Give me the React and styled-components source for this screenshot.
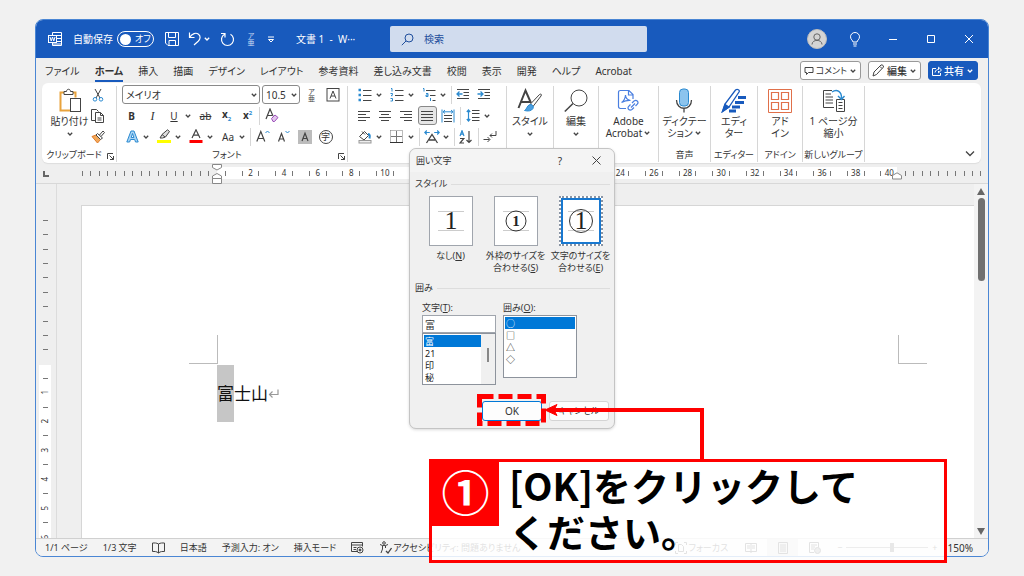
import React from "react";
import { useState } from "react";
import styled, { createGlobalStyle } from "styled-components";

const tabs = ["ファイル", "ホーム", "挿入", "描画", "デザイン", "レイアウト", "参考資料", "差し込み文書", "校閲", "表示", "開発", "ヘルプ", "Acrobat"];

const BLUE = "#185abd";
const SKY = "#2b8ad0";
const INK = "#444";

const Icon = ({ w = 16, h = 16, children, ...rest }) => (
	<svg width={w} height={h} viewBox={`0 0 ${w} ${h}`} fill="none" stroke={INK} strokeWidth="1" aria-hidden="true" {...rest}>
		{children}
	</svg>
);

const Chevron = ({ color = INK }) => (
	<Icon w={8} h={6} stroke={color} strokeWidth="1.3">
		<path d="M1.8 1.8 4 4l2.2-2.2" />
	</Icon>
);

const Launcher = () => (
	<Icon w={9} h={9}>
		<path d="M1.5 7V1.5H7M3.5 3.5l4 4M7.5 4v3.5H4" />
	</Icon>
);

/* title bar */

const WordIcon = () => (
	<Icon w={14} h={14} stroke="#fff">
		<path d="M4.5 3.5v-3h9v13h-9v-3M9 3.5h4.500M9 6.500h4.500M9 9.500h4.500M4.500 12h9" />
		<rect x="0.5" y="3.5" width="8" height="7" fill={BLUE} />
		<path d="m2 5 1.200 4 1.300-4 1.300 4L7 5" />
	</Icon>
);

const SaveIcon = () => (
	<Icon w={14} h={14} stroke="#fff">
		<path d="M.5 .5h13v13H3l-2.500-2.500zM3.500 .5v5h7v-5M4 13.500v-5h6.500v5" />
	</Icon>
);

const UndoIcon = () => (
	<Icon w={14} h={16} stroke="#fff" strokeWidth="1.2">
		<path d="M1.500 1.500v5h5M1.800 6.200C4 2.500 8 1.200 10.500 3.200c2.500 2 1.800 5-.3 7L6 14" />
	</Icon>
);

const RedoIcon = () => (
	<Icon w={15} h={15} stroke="#fff" strokeWidth="1.2">
		<path d="M4.500 2.300A6 6 0 1 0 10.500 2.300M1 1.500h4v4" />
	</Icon>
);

const Ruby = ({ color }) => (
	<RubyBox $color={color}>
		<span>ア</span>
		<span>亜</span>
	</RubyBox>
);

const SearchIcon = () => (
	<Icon w={13} h={13} stroke="#1f4e9c">
		<circle cx="8" cy="5" r="4" />
		<path d="M5 8 .8 12.200" />
	</Icon>
);

const PersonIcon = () => (
	<Icon w={20} h={20} stroke="#666">
		<circle cx="10" cy="10" r="9.500" fill="#d4d4d4" stroke="#bdbdbd" />
		<circle cx="10" cy="8" r="3.200" />
		<path d="M5 15.500c0-5.500 10-5.500 10 0" />
	</Icon>
);

const BulbIcon = () => (
	<Icon w={12} h={15} stroke="#fff">
		<path d="M4 10c0-1.500-2.500-2.500-2.500-5.200a4.500 4.300 0 0 1 9 0C10.500 7.500 8 8.500 8 10zM4 12h4M4.500 14h3" />
	</Icon>
);

/* ribbon */

const PasteIcon = () => (
	<Icon w={24} h={25}>
		<path d="M6 4.500H2.500v18H12M14 4.500h3.500v5" stroke="#e8a33d" strokeWidth="2" />
		<path d="M6 6.500v-3h2.500c0-3 4-3 4 0H15v3z" fill="#fff" />
		<rect x="12.500" y="10.500" width="10" height="13" fill="#fff" />
	</Icon>
);

const CutIcon = () => (
	<Icon w={12} h={14}>
		<path d="M3 1l5 9M9 1 4 10" />
		<circle cx="3" cy="11.300" r="1.800" stroke={SKY} />
		<circle cx="9" cy="11.300" r="1.800" stroke={SKY} />
	</Icon>
);

const CopyIcon = () => (
	<Icon w={14} h={14}>
		<path d="M4.500 11.500h-4v-11h5l2 2M4.500 3.500h5l3 3v7h-8zM9.500 3.500v3h3M6.500 9h4M6.500 11h4" />
	</Icon>
);

const BrushIcon = () => (
	<Icon w={14} h={14}>
		<path d="M1 6.500 5 5l4.500 4.500-3 3.500z" fill="#f2a85a" stroke="#e07b28" />
		<path d="M5 5l1.500-1.500 5 4.500-2 1.500zM8.500 5 12 1l1.500 1.500L10 6.500" fill="#fff" />
	</Icon>
);

const BoxedA = () => (
	<Icon w={14} h={14}>
		<rect x="1" y="0.5" width="12" height="12.500" />
		<path d="M4 10.500 7 3l3 7.500M5 8h4" />
	</Icon>
);

const EraseIcon = () => (
	<Icon w={14} h={15}>
		<path d="M1 11 5 1l3 7M2.500 7.500H7" strokeWidth="1.200" />
		<path d="m6.500 10.500 3.500-3.500 3 2.500-3.500 4H8z" fill="#e3c6ee" stroke="#9b4fb8" />
	</Icon>
);

const TextEffectIcon = () => (
	<Icon w={13} h={13} stroke={SKY}>
		<path d="M.8 12 5 1h3l4.200 11H9.500L8.700 9.500H4.500L3.600 12zM5.200 7.500h2.700L6.500 3.500z" fill="#a9d4f5" />
	</Icon>
);

const MarkerIcon = () => (
	<Icon w={14} h={15}>
		<path d="m3 9 2-3.500L10.500.8l2 1.700-4 5.500L5.500 9zM5 5.500 8 8" fill="#ddd" />
		<path d="M0 12.500h14" stroke="#ff0" strokeWidth="3" />
	</Icon>
);

const FontColorIcon = () => (
	<Icon w={14} h={15}>
		<path d="M3 9 7 .8 11 9M4.500 6.200h5" strokeWidth="1.200" />
		<path d="M.5 12.500h13" stroke="red" strokeWidth="3" />
	</Icon>
);

const GrowIcon = ({ down }) => (
	<Icon w={14} h={13}>
		{down ? <path d="m1.500 11.500 3-8 3 8M2.500 9H6.500" strokeWidth="1.200" /> : <path d="m.8 11.500 4-10 4 10M2.500 8.500h4.600" strokeWidth="1.200" />}
		{down ? <path d="m8.500 1 2 2 2-2" stroke={SKY} /> : <path d="m9.500 3 2-2 2 2" stroke={SKY} />}
	</Icon>
);

const ShadedA = () => (
	<Icon w={14} h={14}>
		<rect width="14" height="14" fill="#bcbcbc" stroke="none" />
		<path d="M4 11 7 3.200 10 11M5 8.500h4" strokeWidth="1.200" />
	</Icon>
);

const ListIcon = ({ kind }) => (
	<Icon w={14} h={14}>
		{kind === "bullet" && <path d="M.5 2h2.500M.5 7h2.500M.5 12h2.500" stroke={SKY} strokeWidth="2.500" />}
		{kind === "number" && <path d="M1 .5h1v3M.5 5.500h2v1.200l-1.500 1h1.500M.5 10.500h2v2.500h-2" stroke={SKY} />}
		{kind !== "multi" && <path d="M5 2.500h8.500M5 7.500h8.500M5 12.500h8.500" />}
		{kind === "multi" && <path d="M1 .5h1v3M4 5.500h2v3H4v-1.500h2M8.500 10v3" stroke={SKY} />}
		{kind === "multi" && <path d="M4 2.500h9.500M8 7.500h5.500M10.500 12.500h3" />}
	</Icon>
);

const IndentIcon = ({ out }) => (
	<Icon w={14} h={13}>
		<path d="M1 1.500h12M7.500 4.500H13M7.500 7.500H13M1 10.500h12" />
		<path d={out ? "M6.500 6H1M3.500 3.500 1 6l2.500 2.500" : "M.5 6H6M3.500 3.500 6 6 3.500 8.500"} stroke={SKY} strokeWidth="1.300" />
	</Icon>
);

const alignPaths = {
	left: "M1 1.500h12M1 4.500h8M1 7.500h12M1 10.500h8",
	center: "M1 1.500h12M3 4.500h8M1 7.500h12M3 10.500h8",
	right: "M1 1.500h12M5 4.500h8M1 7.500h12M5 10.500h8",
	both: "M1 1.500h12M1 4.500h12M1 7.500h12M1 10.500h12",
};

const AlignIcon = ({ kind }) => (
	<Icon w={14} h={12}>
		<path d={alignPaths[kind]} />
	</Icon>
);

const DistributeIcon = () => (
	<Icon w={14} h={14}>
		<path d="M3 6.500h8M3 9.500h8M3 12.500h8" />
		<path d="M1 .5v13M13 .5v13M2 2.800h10M4 1 2 2.800l2 1.700M10 1l2 1.800-2 1.700" stroke={SKY} />
	</Icon>
);

const SpacingIcon = () => (
	<Icon w={14} h={13}>
		<path d="M6 1.500h7.500M6 4.500h7.500M6 8.500h7.500M6 11.500h7.500" />
		<path d="M2.500 1v11M.8 3 2.500 1l1.700 2M.8 10l1.700 2 1.700-2" stroke={SKY} strokeWidth="1.200" />
	</Icon>
);

const BucketIcon = () => (
	<Icon w={14} h={14}>
		<path d="m1.500 6.500 5-5 4 4-4.500 4.500zM4 1.500l3 3" />
		<path d="M10 4c2 0 2 2 1.500 4.500" stroke={SKY} strokeWidth="2" />
		<rect x="1" y="10.500" width="12" height="2.500" fill="#eee" stroke="#999" />
	</Icon>
);

const BordersIcon = () => (
	<Icon w={13} h={13} stroke="#777">
		<path d="M.5 .5h12v12M.5 .5v12" strokeDasharray="1 1" />
		<path d="M6.500 1v11M1 6.500h11" />
		<path d="M0 12.500h13" stroke="#333" />
	</Icon>
);

const AsianIcon = () => (
	<Icon w={16} h={14}>
		<path d="m2.500 13 5.500-8.500 5.500 8.500M5 10h6" strokeWidth="1.300" />
		<path d="M.8 2.500h5M2.800 .5l-2 2 2 2M15.200 2.500h-5M13.200.5l2 2-2 2" stroke={SKY} strokeWidth="1.200" />
	</Icon>
);

const SortIcon = () => (
	<Icon w={14} h={14}>
		<path d="m1 6 2-5.300L5 6M1.700 4.200h2.600" stroke={SKY} strokeWidth="1.200" />
		<path d="M1 8.500h3.800L1 13h4M10 1v11.500M7.500 10l2.500 2.500 2.500-2.500" strokeWidth="1.200" />
	</Icon>
);

const MarksIcon = () => (
	<Icon w={14} h={14}>
		<path d="M13 1v4.500H7M9 3.500l-2 2 2 2M.5 9.500h6M4.500 7l2.500 2.500L4.500 12" />
	</Icon>
);

const StyleIcon = () => (
	<Icon w={26} h={25}>
		<path d="M1.500 20 8.500 2.500 14 15M4 14h9" strokeWidth="2" />
		<path d="m13.500 16 9-9.500c1.500-1 2.500 0 1.500 1.500L16 18.500z" fill="#fff" />
		<path d="M13 16.500c2.500 0 4 1.500 3 4-1.500 2.500-5 3-8.500 2 2.500-1 2-5 5.500-6z" fill="#4b9fe0" stroke={SKY} />
	</Icon>
);

const FindIcon = () => (
	<Icon w={24} h={24}>
		<circle cx="15" cy="9" r="8" />
		<path d="M9 14.500.8 22.500" strokeWidth="1.500" />
	</Icon>
);

const AcrobatIcon = () => (
	<Icon w={22} h={24} stroke="#4a7fe0" strokeWidth="1.200">
		<path d="M9 19.500H3.500c-1.500 0-2-.8-2-2v-14c0-1.500.7-2 2-2H12l4 4V10M11.500 1.500V6H16" />
		<path d="M4.500 13.500c2-1 4-4.500 4-7.500 0 3 2 5 5 5.500-3-.2-6 .5-9 2z" />
		<path d="m15 14 2-2c2.500-1.500 5 .5 3.500 3l-2 2M17 18.500l-2 2c-2.500 1.500-5-.5-3.500-3l2-2M14 18.500l4-4" />
	</Icon>
);

const MicIcon = () => (
	<Icon w={18} h={25}>
		<rect x="4.500" y="1" width="9" height="17" rx="3.500" fill="#8cc4ee" stroke={SKY} />
		<path d="M1.500 12c0 11 15 11 15 0M9 20.500V24.500" strokeWidth="1.300" />
	</Icon>
);

const EditorIcon = () => (
	<Icon w={26} h={25} stroke={BLUE} strokeWidth="1.300">
		<path d="M17 9.500h8M14 14.500h9M11 19h8M8 23h7" strokeWidth="3" />
		<path d="M1.500 23.500 4 16 14.500 2c2-1.500 4.500 0 3.500 2L8 19z" fill="#fff" />
		<path d="M4 16.500 8 19 1.500 23.500z" fill={BLUE} />
	</Icon>
);

const AddinIcon = () => (
	<Icon w={24} h={24} stroke="#e0704a">
		<path d="M.5 .5h23v23H.5z" />
		<path d="M3.500 3.500h7v7h-7zM13.500 3.500h7v7h-7zM3.500 13.500h7v7h-7zM13.500 13.500h7v7h-7z" strokeWidth="1.200" />
	</Icon>
);

const ShrinkIcon = () => (
	<Icon w={24} h={24}>
		<path d="M10 1.500H1.500v17H12M3.500 5h5.500M3.500 8h7.500M3.500 11h7.500M3.500 14h7.500" />
		<path d="M14.500 10.500h8v12h-8zM16.500 13.500h4M16.500 16.500h4M16.500 19.500h4" />
		<path d="M10 3c5-3.500 10-.5 9.500 7M16 7l3.500 3.500L22.500 7" stroke={SKY} strokeWidth="1.400" />
	</Icon>
);

const BookIcon = () => (
	<Icon w={13} h={12}>
		<path d="M6.500 2v9M6.500 2c-2-1.300-4-1-6-1v8.500c2 0 4-.3 6 1.500 2-1.800 4-1.500 6-1.500V1c-2 0-4-.3-6 1z" />
	</Icon>
);

const MacroIcon = () => (
	<Icon w={13} h={12}>
		<path d="M6 9.500H.5v-9h11v4M.5 3h11M2.500 5.500h3M2.500 7.500h2.500" />
		<circle cx="9" cy="8" r="3" />
		<circle cx="9" cy="8" r="1" fill={INK} />
	</Icon>
);

const AccessIcon = () => (
	<Icon w={13} h={13}>
		<circle cx="5" cy="2" r="1.300" />
		<path d="M1 3.500c3 1.500 5 1.500 8 0M3.500 5v3L2 12M6.500 5v2" />
		<path d="m7 10 2 2 3.500-5" strokeWidth="1.300" />
	</Icon>
);

const Big = ({ icon, lines, chevron, inline }) => (
	<BigButton type="button">
		<BigArt>{icon}</BigArt>
		{lines.map((line, i) => (
			<span key={line}>
				{line}
				{inline && i === lines.length - 1 && <Chevron />}
			</span>
		))}
		{chevron && <Chevron />}
	</BigButton>
);

const Split = ({ icon, label }) => (
	<SplitButton type="button" aria-label={label}>
		<Slot>{icon}</Slot>
		<Chevron />
	</SplitButton>
);

const Tool = ({ icon, label, active }) => (
	<ToolButton type="button" aria-label={label} $active={active}>
		{icon}
	</ToolButton>
);

const TitleBar = () => (
	<Title>
		<TitleLeft>
			<WordIcon />
			<AutoSave>
				自動保存
				<Toggle type="button" role="switch" aria-checked="false">
					<i />
					オフ
				</Toggle>
			</AutoSave>
			<QuickTools>
				<SaveIcon />
				<UndoRow>
					<UndoIcon />
					<Chevron color="#fff" />
				</UndoRow>
				<RedoIcon />
				<Ruby color="#c9d9f2" />
				<Icon w={8} h={7} stroke="#fff">
					<path d="M1 1h6M1.500 3.500h5L4 6z" />
				</Icon>
			</QuickTools>
			<DocName>文書 1&nbsp; -&nbsp; W···</DocName>
		</TitleLeft>
		<SearchBox>
			<SearchIcon />
			<input type="text" placeholder="検索" aria-label="検索" />
		</SearchBox>
		<TitleRight>
			<button type="button" aria-label="アカウント"><PersonIcon /></button>
			<button type="button" aria-label="ヒント"><BulbIcon /></button>
			<button type="button" aria-label="最小化">
				<Icon w={10} h={10} stroke="#fff"><path d="M1 5.500h8" /></Icon>
			</button>
			<button type="button" aria-label="最大化">
				<Icon w={10} h={10} stroke="#fff"><path d="M1.500 1.500h7v7h-7z" /></Icon>
			</button>
			<button type="button" aria-label="閉じる">
				<Icon w={10} h={10} stroke="#fff"><path d="m1 1 8 8M9 1 1 9" /></Icon>
			</button>
		</TitleRight>
	</Title>
);

const TabBar = () => {
	const [current, setCurrent] = useState("ホーム");
	return (
		<TabRow>
			<nav>
				{tabs.map((tab) => (
					<Tab key={tab} type="button" $on={tab === current} onClick={() => setCurrent(tab)}>
						{tab}
					</Tab>
				))}
			</nav>
			<TabActions>
				<ActionButton type="button">
					<Icon w={10} h={10}><path d="M1 1.500h8v5H4.500L2.500 8.500v-2H1z" /></Icon>
					コメント
					<Chevron />
				</ActionButton>
				<ActionButton type="button">
					<Icon w={13} h={13}><path d="m1 12 1-4 7-7c1.500-.5 2.500.5 2.500 2l-7 7.500zM8 2.500l2 2" /></Icon>
					<b>編集</b>
					<Chevron />
				</ActionButton>
				<ActionButton type="button" $primary>
					<Icon w={10} h={10} stroke="#fff"><path d="M4 2.500H.5v7h8V7M3 6.500c.5-2.500 2-3 3.500-3V1.200L9.500 4l-3 2.800V5" /></Icon>
					<b>共有</b>
					<Chevron color="#fff" />
				</ActionButton>
			</TabActions>
		</TabRow>
	);
};

const Ribbon = () => (
	<RibbonPanel>
		<Group $w={75}>
			<GroupBody>
				<Big icon={<PasteIcon />} lines={["貼り付け"]} chevron />
				<Rows>
					<ToolRow><Tool icon={<CutIcon />} label="切り取り" /></ToolRow>
					<ToolRow><Tool icon={<CopyIcon />} label="コピー" /></ToolRow>
					<ToolRow><Tool icon={<BrushIcon />} label="書式のコピー" /></ToolRow>
				</Rows>
			</GroupBody>
			<GroupLabel $launcher>クリップボード<Launcher /></GroupLabel>
		</Group>
		<Group $w={231}>
			<GroupBody>
				<Rows>
					<ToolRow>
						<Combo $w={138}><input aria-label="フォント" defaultValue="メイリオ" /><Chevron /></Combo>
						<Combo $w={38}><input aria-label="サイズ" defaultValue="10.5" /><Chevron /></Combo>
						<Tool icon={<Ruby color="#444" />} label="ルビ" />
						<Tool icon={<BoxedA />} label="囲み線" />
					</ToolRow>
					<ToolRow>
						<Tool icon={<b>B</b>} label="太字" />
						<Tool icon={<Italic>I</Italic>} label="斜体" />
						<Split icon={<u>U</u>} label="下線" />
						<Tool icon={<s>ab</s>} label="取り消し線" />
						<Tool icon={<Script>x<sub>2</sub></Script>} label="下付き" />
						<Tool icon={<Script>x<sup>2</sup></Script>} label="上付き" />
						<Divider />
						<Tool icon={<EraseIcon />} label="書式のクリア" />
					</ToolRow>
					<ToolRow>
						<Split icon={<TextEffectIcon />} label="文字の効果" />
						<Split icon={<MarkerIcon />} label="蛍光ペン" />
						<Split icon={<FontColorIcon />} label="フォントの色" />
						<Split icon="Aa" label="文字種の変換" />
						<Divider />
						<Tool icon={<GrowIcon />} label="拡大" />
						<Tool icon={<GrowIcon down />} label="縮小" />
						<Tool icon={<ShadedA />} label="網かけ" />
						<Tool icon={<Enclosed>字</Enclosed>} label="囲い文字" />
					</ToolRow>
				</Rows>
			</GroupBody>
			<GroupLabel $launcher>フォント<Launcher /></GroupLabel>
		</Group>
		<Group $w={159}>
			<GroupBody>
				<Rows>
					<ToolRow>
						<Split icon={<ListIcon kind="bullet" />} label="箇条書き" />
						<Split icon={<ListIcon kind="number" />} label="段落番号" />
						<Split icon={<ListIcon kind="multi" />} label="アウトライン" />
						<Divider />
						<Tool icon={<IndentIcon out />} label="インデントを減らす" />
						<Tool icon={<IndentIcon />} label="インデントを増やす" />
					</ToolRow>
					<ToolRow>
						<Tool icon={<AlignIcon kind="left" />} label="左揃え" />
						<Tool icon={<AlignIcon kind="center" />} label="中央揃え" />
						<Tool icon={<AlignIcon kind="right" />} label="右揃え" />
						<Tool icon={<AlignIcon kind="both" />} label="両端揃え" active />
						<Tool icon={<DistributeIcon />} label="均等割り付け" />
						<Divider />
						<Split icon={<SpacingIcon />} label="行間" />
					</ToolRow>
					<ToolRow>
						<Split icon={<BucketIcon />} label="塗りつぶし" />
						<Split icon={<BordersIcon />} label="罫線" />
						<Divider />
						<Split icon={<AsianIcon />} label="拡張書式" />
						<Divider />
						<Tool icon={<SortIcon />} label="並べ替え" />
						<Divider />
						<Tool icon={<MarksIcon />} label="編集記号" />
					</ToolRow>
				</Rows>
			</GroupBody>
		</Group>
		<Group $w={47}>
			<GroupBody><Big icon={<StyleIcon />} lines={["スタイル"]} chevron /></GroupBody>
		</Group>
		<Group $w={45}>
			<GroupBody><Big icon={<FindIcon />} lines={["編集"]} chevron /></GroupBody>
		</Group>
		<Group $w={60}>
			<GroupBody><Big icon={<AcrobatIcon />} lines={["Adobe", "Acrobat"]} inline /></GroupBody>
		</Group>
		<Group $w={52}>
			<GroupBody><Big icon={<MicIcon />} lines={["ディクテー", "ション"]} inline /></GroupBody>
			<GroupLabel>音声</GroupLabel>
		</Group>
		<Group $w={47}>
			<GroupBody><Big icon={<EditorIcon />} lines={["エディ", "ター"]} /></GroupBody>
			<GroupLabel>エディター</GroupLabel>
		</Group>
		<Group $w={45}>
			<GroupBody><Big icon={<AddinIcon />} lines={["アド", "イン"]} /></GroupBody>
			<GroupLabel>アドイン</GroupLabel>
		</Group>
		<Group $w={62}>
			<GroupBody><Big icon={<ShrinkIcon />} lines={["1 ページ分", "縮小"]} /></GroupBody>
			<GroupLabel>新しいグループ</GroupLabel>
		</Group>
		<Collapse type="button" aria-label="リボンを折りたたむ">
			<Icon w={10} h={7} strokeWidth="1.300"><path d="m1 1.500 4 4 4-4" /></Icon>
		</Collapse>
	</RibbonPanel>
);

const range = (n) => Array.from({ length: n }, (_, i) => i + 1);

const Ruler = () => (
	<RulerRow>
		<TabStop>
			<Icon w={6} h={6} stroke="#666" strokeWidth="2"><path d="M1 0v5h5" /></Icon>
		</TabStop>
		<Ticks $grow={135} $pad="0 4px 0 0">
			{range(16).map((n) => <Cell key={n}><i /></Cell>)}
		</Ticks>
		<Ticks $grow={672} $pad="0 4px" $white>
			{range(80).map((n) => (
				<Cell key={n}>{n % 4 === 0 ? n / 2 : n % 2 === 1 && <i />}</Cell>
			))}
			<IndentLeft>
				<Icon w={10} h={20} fill="#fff" stroke="#888">
					<path d="M.5 .5h9v3L5 6 .5 3.500zM.5 14.500V12L5 9.500 9.500 12v2.500zM.5 14.500h9v5h-9z" />
				</Icon>
			</IndentLeft>
			<IndentRight>
				<Icon w={10} h={8} fill="#fff" stroke="#888">
					<path d="M.5 7V3.500L5 .8l4.500 2.700V7z" />
				</Icon>
			</IndentRight>
		</Ticks>
		<Ticks $grow={84} $pad="0 0 0 4px">
			{range(10).map((n) => <Cell key={n}><i /></Cell>)}
		</Ticks>
	</RulerRow>
);

const Document = () => (
	<DocArea>
		<SideRuler>
			<SideTop>
				{range(10).map((n) => <SideCell key={n}><i /></SideCell>)}
			</SideTop>
			<SideBottom>
				{range(12).map((n) => (
					<SideCell key={n}>{n % 2 === 0 ? <span>{n / 2}</span> : <i />}</SideCell>
				))}
			</SideBottom>
		</SideRuler>
		<Canvas>
			<Page>
				<Corners>
					<Corner />
					<Corner $right />
				</Corners>
				<Paragraph>
					<mark>富</mark>
					士山
					<Icon w={12} h={12} stroke="#999" strokeWidth="1.200">
						<path d="M10 1.500v5H1.500M4.500 3.500l-3 3 3 3" />
					</Icon>
				</Paragraph>
			</Page>
		</Canvas>
		<ScrollBar>
			<Icon w={8} h={7} fill="#666" stroke="none"><path d="M4 0 8 7H0z" /></Icon>
			<Thumb />
			<Icon w={8} h={7} fill="#666" stroke="none"><path d="M4 7 8 0H0z" /></Icon>
		</ScrollBar>
	</DocArea>
);

const StatusBar = () => (
	<Status>
		<StatusGroup>
			<span>1/1 ページ</span>
			<span>1/3 文字</span>
			<BookIcon />
			<span>日本語</span>
			<span>予測入力: オン</span>
			<span>挿入モード</span>
			<MacroIcon />
			<span><AccessIcon />アクセシビリティ: 問題ありません</span>
		</StatusGroup>
		<ViewGroup>
			<span>
				<Icon w={12} h={12}>
					<path d="M3 .5H.5V3M9 .5h2.500V3M3 11.500H.5V9M9 11.500h2.500V9M3.500 9.500v-7h3l2 2v5z" />
				</Icon>
				フォーカス
			</span>
			<ViewModes>
				<ViewButton type="button" aria-label="閲覧モード">
					<Icon w={12} h={12}><path d="M6 2v9M.5 1.500h11v8h-11zM2 4h3M2 6h3M7 4h3M7 6h3" /></Icon>
				</ViewButton>
				<ViewButton type="button" aria-label="印刷レイアウト" $on>
					<Icon w={12} h={12}><path d="M1.500 .5h9v11h-9zM3 3h6M3 5h6M3 7h6M3 9h6" /></Icon>
				</ViewButton>
				<ViewButton type="button" aria-label="Web レイアウト">
					<Icon w={12} h={12}><path d="M5 10.500H.5V.5h9v5M2 3h6M2 5h4M2 7h3" /><circle cx="8.500" cy="8.500" r="3" fill="#999" /></Icon>
				</ViewButton>
			</ViewModes>
			<Zoom>
				−
				<input type="range" aria-label="ズーム" min="10" max="250" defaultValue="145" />
				+
			</Zoom>
			<Percent>150%</Percent>
		</ViewGroup>
	</Status>
);

const StyleSample = ({ kind }) => (
	<Icon w={28} h={28} stroke="#333">
		<path d="M1 4.500h26M1 23.500h26" stroke="#ccc" />
		{kind === "small" && <circle cx="14" cy="14" r="10" />}
		{kind === "large" && <circle cx="14" cy="14" r="11.500" />}
		<text x="14" y={kind === "small" ? 19 : 22} textAnchor="middle" fill="#222" stroke="none" fontWeight={kind === "small" ? 700 : 400} fontSize={kind === "small" ? 15 : 26} fontFamily="'Liberation Serif', serif">1</text>
	</Icon>
);

const EncloseDialog = () => {
	const [text, setText] = useState("富");
	return (
		<Dialog role="dialog" aria-label="囲い文字">
			<DialogTitle>
				囲い文字
				<button type="button" aria-label="ヘルプ">?</button>
				<button type="button" aria-label="閉じる">
					<Icon w={9} h={9}><path d="m.5 .5 8 8M8.500 .5l-8 8" /></Icon>
				</button>
			</DialogTitle>
			<Section>スタイル</Section>
			<StyleOptions>
				<StyleOption type="button">
					<i><StyleSample /></i>
					<span>なし(<u>N</u>)</span>
				</StyleOption>
				<StyleOption type="button">
					<i><StyleSample kind="small" /></i>
					<span>外枠のサイズを<br />合わせる(<u>S</u>)</span>
				</StyleOption>
				<StyleOption type="button" $on>
					<i><StyleSample kind="large" /></i>
					<span>文字のサイズを<br />合わせる(<u>E</u>)</span>
				</StyleOption>
			</StyleOptions>
			<Section>囲み</Section>
			<Fields>
				<Field>
					<label htmlFor="enc-text">文字(<u>T</u>):</label>
					<input id="enc-text" value={text} onChange={(e) => setText(e.target.value)} />
					<ListWrap>
						<ListBox size="4" $h={52} aria-label="文字の候補" defaultValue="富" onChange={(e) => setText(e.target.value)}>
							<option>富</option>
							<option>21</option>
							<option>印</option>
							<option>秘</option>
						</ListBox>
						<ListScroll />
					</ListWrap>
				</Field>
				<Field>
					<label htmlFor="enc-shape">囲み(<u>O</u>):</label>
					<ListBox id="enc-shape" size="4" $h={63} defaultValue="○">
						<option>○</option>
						<option>□</option>
						<option>△</option>
						<option>◇</option>
					</ListBox>
				</Field>
			</Fields>
			<DialogButtons>
				<DialogButton type="button" $main>OK</DialogButton>
				<DialogButton type="button">キャンセル</DialogButton>
			</DialogButtons>
		</Dialog>
	);
};

const App = () => (
	<Desktop>
		<GlobalStyle />
		<Window>
			<TitleBar />
			<TabBar />
			<Ribbon />
			<Ruler />
			<Document />
			<StatusBar />
		</Window>
		<EncloseDialog />
		<Pointer>
			<Icon w={232} h={70} stroke="red">
				<rect x="5.500" y="5.500" width="64" height="27" strokeWidth="5" strokeDasharray="14 5" />
				<path d="M228 70V19H78" strokeWidth="4" />
				<path d="M71 19 83 13.500 80 19 83 24.500z" fill="red" />
			</Icon>
		</Pointer>
		<Callout>
			<Step>①</Step>
			<p>[OK]をクリックして<br />ください。</p>
		</Callout>
	</Desktop>
);

export default App;

const GlobalStyle = createGlobalStyle`
	* { box-sizing: border-box; }
	body {
		margin: 0;
		background: #f1f1f1;
		color: #333;
		font: 10px/14px "Noto Sans", "Noto Sans CJK JP", sans-serif;
		font-feature-settings: "palt";
	}
	button, input, select {
		margin: 0;
		padding: 0;
		border: 0;
		background: none;
		color: inherit;
		font: inherit;
		font-feature-settings: inherit;
		white-space: nowrap;
	}
	svg { display: block; flex: none; }
`;

const Desktop = styled.div`
	position: relative;
	display: flex;
	min-height: 100vh;
	padding: 19px 35px;
`;

const Window = styled.div`
	flex: 1;
	min-width: 0;
	display: flex;
	flex-direction: column;
	border: 1px solid #4a86d4;
	border-radius: 8px;
	background: #efefef;
	overflow: hidden;
	white-space: nowrap;
`;

const Title = styled.header`
	display: flex;
	align-items: center;
	height: 38px;
	background: ${BLUE};
	color: #fff;
`;

const TitleLeft = styled.div`
	flex: 0 0 354px;
	display: flex;
	align-items: center;
	gap: 11px;
	padding-left: 12px;
`;

const AutoSave = styled.div`
	display: flex;
	align-items: center;
	gap: 4px;
`;

const Toggle = styled.button`
	display: flex;
	align-items: center;
	gap: 4px;
	width: 37px;
	height: 16px;
	padding: 0 2px;
	border: 1px solid #fff;
	border-radius: 8px;
	font-size: 9px;

	i {
		flex: none;
		width: 11px;
		height: 11px;
		border-radius: 50%;
		background: #fff;
	}
`;

const QuickTools = styled.div`
	display: flex;
	align-items: center;
	gap: 9px;
`;

const UndoRow = styled.div`
	display: flex;
	align-items: center;
	gap: 1px;
`;

const RubyBox = styled.span`
	display: flex;
	flex-direction: column;
	align-items: center;
	width: 14px;
	color: ${(p) => p.$color};
	font-size: 7px;
	line-height: 7px;
`;

const DocName = styled.span`
	padding-left: 10px;
`;

const SearchBox = styled.div`
	flex: 0 1 257px;
	display: flex;
	align-items: center;
	gap: 10px;
	height: 26px;
	padding-left: 11px;
	border-radius: 2px;
	background: #d1dcee;
	color: #1f4e9c;

	input {
		flex: 1;
		min-width: 0;
		outline: none;
	}
	input::placeholder { color: #1f4e9c; }
`;

const TitleRight = styled.div`
	flex: 1;
	display: flex;
	justify-content: flex-end;

	button {
		display: grid;
		place-items: center;
		width: 38px;
		height: 38px;
	}
`;

const TabRow = styled.div`
	display: flex;
	justify-content: space-between;
	align-items: center;
	height: 25px;
	padding: 0 10px 0 9px;

	nav {
		display: flex;
		gap: 15px;
	}
`;

const Tab = styled.button`
	height: 21px;
	margin-top: 2px;
	border-bottom: 2px solid ${(p) => (p.$on ? BLUE : "transparent")};
	font-weight: ${(p) => (p.$on ? 700 : 400)};
`;

const TabActions = styled.div`
	display: flex;
	gap: 7px;
`;

const ActionButton = styled.button`
	display: flex;
	align-items: center;
	gap: 2px;
	height: 19px;
	padding: 0 3px;
	border: 1px solid ${(p) => (p.$primary ? BLUE : "#999")};
	border-radius: 3px;
	background: ${(p) => (p.$primary ? BLUE : "#fff")};
	color: ${(p) => (p.$primary ? "#fff" : "#333")};
	font-size: 9px;

	b {
		font-size: 10px;
		font-weight: 500;
	}
`;

const RibbonPanel = styled.div`
	display: flex;
	height: 80px;
	margin: 0 7px 0 6px;
	border-radius: 6px;
	background: #fff;
	box-shadow: 0 1px 1px #ddd;
`;

const Group = styled.section`
	flex: 0 0 ${(p) => p.$w}px;
	min-width: 0;
	display: flex;
	flex-direction: column;
	justify-content: space-between;
	margin: 3px 0 1px;
	border-right: 1px solid #d6d6d6;
`;

const GroupBody = styled.div`
	display: flex;
	justify-content: center;
`;

const GroupLabel = styled.div`
	position: relative;
	display: flex;
	justify-content: center;
	padding-right: ${(p) => (p.$launcher ? 10 : 0)}px;
	font-size: 9px;
	line-height: 14px;

	svg {
		position: absolute;
		right: 1px;
		top: 4px;
	}
`;

const Rows = styled.div`
	display: flex;
	flex-direction: column;
	margin-top: -2px;
`;

const ToolRow = styled.div`
	display: flex;
	align-items: center;
	gap: 2px;
	height: 21px;
`;

const Slot = styled.span`
	display: grid;
	place-items: center;
	width: 20px;
`;

const SplitButton = styled.button`
	display: flex;
	align-items: center;
	width: 30px;
`;

const ToolButton = styled.button`
	display: grid;
	place-items: center;
	width: 19px;
	height: 19px;
	border: 1px solid ${(p) => (p.$active ? "#888" : "transparent")};
	border-radius: 3px;
	background: ${(p) => (p.$active ? "#e6e6e6" : "none")};
`;

const Divider = styled.span`
	width: 1px;
	height: 18px;
	background: #d6d6d6;
`;

const Combo = styled.div`
	display: flex;
	align-items: center;
	width: ${(p) => p.$w}px;
	height: 19px;
	padding: 0 1px 0 3px;
	border: 1px solid #8a8a8a;
	border-radius: 3px;

	input {
		flex: 1;
		min-width: 0;
	}
`;

const Italic = styled.i`
	font-family: "Liberation Serif", serif;
	font-size: 12px;
`;

const Script = styled.b`
	line-height: 10px;

	sub, sup {
		color: ${SKY};
		font-size: 6px;
		line-height: 6px;
	}
`;

const Enclosed = styled.span`
	display: grid;
	place-items: center;
	width: 14px;
	height: 14px;
	border: 1px solid #444;
	border-radius: 50%;
	font-size: 9px;
	line-height: 9px;
`;

const BigButton = styled.button`
	display: flex;
	flex-direction: column;
	align-items: center;
	line-height: 12px;

	span {
		display: flex;
		align-items: center;
		gap: 1px;
	}
	> svg { margin-top: 4px; }
`;

const BigArt = styled.div`
	display: grid;
	place-items: center;
	height: 29px;
`;

const Collapse = styled.button`
	align-self: flex-end;
	margin: 0 6px 6px auto;
`;

const RulerRow = styled.div`
	position: relative;
	display: flex;
	align-items: flex-start;
	height: 21px;
	padding: 4px 3px 0 0;
	border-bottom: 1px solid #d8d8d8;
`;

const TabStop = styled.div`
	flex: 0 0 42px;
	display: grid;
	place-items: center;
	height: 14px;
	padding-right: 23px;
`;

const Ticks = styled.div`
	position: relative;
	flex: ${(p) => p.$grow} 1 0;
	display: flex;
	height: 12px;
	padding: ${(p) => p.$pad};
	background: ${(p) => (p.$white ? "#fff" : "none")};
`;

const Cell = styled.span`
	flex: 1 1 0;
	min-width: 0;
	display: flex;
	justify-content: center;
	align-items: center;
	font-size: 8px;
	line-height: 12px;

	i {
		width: 1px;
		height: 5px;
		background: #777;
	}
`;

const IndentLeft = styled.div`
	position: absolute;
	left: -5px;
	top: -3px;
`;

const IndentRight = styled.div`
	position: absolute;
	right: -5px;
	top: 5px;
`;

const DocArea = styled.main`
	flex: 1;
	display: flex;
	min-height: 0;
`;

const SideRuler = styled.div`
	flex: 0 0 21px;
	display: flex;
	flex-direction: column;
	padding: 0 5px 0 3px;
	border-right: 1px solid #dcdcdc;
	overflow: hidden;
`;

const SideTop = styled.div`
	height: 181px;
	display: flex;
	flex-direction: column;
	padding: 29px 0 8px;
`;

const SideBottom = styled.div`
	flex: 1;
	display: flex;
	flex-direction: column;
	margin-bottom: -6px;
	padding-top: 6px;
	background: #fff;
`;

const SideCell = styled.div`
	flex: 1;
	display: grid;
	place-items: center;
	font-size: 8px;
	line-height: 10px;

	i {
		width: 5px;
		height: 1px;
		background: #777;
	}
	span {
		writing-mode: vertical-rl;
		transform: rotate(180deg);
	}
`;

const Canvas = styled.div`
	flex: 1;
	display: flex;
	padding: 21px 0 0 24px;
`;

const Page = styled.article`
	flex: 1;
	padding: 129px 47px 0 107px;
	border: solid #d6d6d6;
	border-width: 1px 0 0 1px;
	background: #fff;
`;

const Corners = styled.div`
	display: flex;
	justify-content: space-between;
`;

const Corner = styled.span`
	width: 29px;
	height: 29px;
	border: solid #bbb;
	border-width: ${(p) => (p.$right ? "0 0 1px 1px" : "0 1px 1px 0")};
`;

const Paragraph = styled.p`
	display: flex;
	align-items: center;
	margin: 1px 0 0 28px;
	color: #111;
	font-size: 17px;
	line-height: 57px;

	mark {
		background: #c6c6c6;
		color: inherit;
	}
`;

const ScrollBar = styled.div`
	flex: 0 0 14px;
	display: flex;
	flex-direction: column;
	align-items: center;
	padding: 4px 0 3px;
	background: #f3f3f3;

	svg:last-child { margin-top: auto; }
`;

const Thumb = styled.div`
	width: 7px;
	height: 83px;
	margin-top: 3px;
	border-radius: 4px;
	background: #707070;
`;

const Status = styled.footer`
	display: flex;
	justify-content: space-between;
	height: 18px;
	padding: 0 15px 0 9px;
	border-top: 1px solid #d0d0d0;
	background: #f3f3f3;
	font-size: 9px;

	span {
		display: flex;
		align-items: center;
		gap: 1px;
	}
`;

const StatusGroup = styled.div`
	display: flex;
	align-items: center;
	gap: 15px;
`;

const ViewGroup = styled.div`
	display: flex;
	align-items: center;
`;

const ViewModes = styled.div`
	display: flex;
	gap: 1px;
	padding: 0 7px;
`;

const ViewButton = styled.button`
	display: grid;
	place-items: center;
	width: 31px;
	height: 17px;
	background: ${(p) => (p.$on ? "#ddd" : "none")};
`;

const Zoom = styled.label`
	display: flex;
	align-items: center;
	gap: 4px;
	padding-right: 10px;

	input {
		width: 82px;
		height: 12px;
		appearance: none;
		background: linear-gradient(#888, #888) center / 100% 1px no-repeat;
	}
	input::-webkit-slider-thumb {
		appearance: none;
		width: 4px;
		height: 9px;
		background: #666;
	}
`;

const Percent = styled.span`
	font-size: 10px;
`;

const Dialog = styled.div`
	position: absolute;
	left: 409px;
	top: 148px;
	width: 206px;
	height: 281px;
	border: 1px solid #c4c4c4;
	border-radius: 7px;
	background: #f0f0f0;
	box-shadow: 0 1px 3px rgba(0, 0, 0, 0.15);
	font-size: 9px;
	white-space: nowrap;
`;

const DialogTitle = styled.div`
	display: flex;
	align-items: center;
	height: 23px;
	padding-left: 6px;
	border-radius: 7px 7px 0 0;
	background: #f4f4f4;

	button {
		display: grid;
		place-items: center;
		width: 36px;
		height: 22px;
		font-size: 10px;
	}
	button:first-of-type { margin-left: auto; }
`;

const Section = styled.div`
	display: flex;
	align-items: center;
	gap: 4px;
	height: 24px;
	padding: 0 4px 0 5px;

	&::after {
		content: "";
		flex: 1;
		height: 1px;
		background: #ddd;
	}
`;

const StyleOptions = styled.div`
	display: grid;
	grid-template-columns: repeat(3, 65px);
	height: 80px;
	padding-left: 8px;
`;

const StyleOption = styled.button`
	display: flex;
	flex-direction: column;
	align-items: center;
	gap: 4px;
	line-height: 12px;

	i {
		display: grid;
		place-items: center;
		width: 44px;
		height: 50px;
		border: 1px solid #a0a5ad;
		background: #fff;
		font-style: normal;
		${(p) => p.$on && "border: 2px dotted #8a94a3; outline: 2px solid #1878d0; outline-offset: -4px;"}
	}
`;

const Fields = styled.div`
	display: flex;
	gap: 7px;
	padding: 0 0 0 12px;
`;

const Field = styled.div`
	display: flex;
	flex-direction: column;
	width: 74px;

	label { line-height: 15px; }
	input {
		height: 18px;
		padding-left: 2px;
		border: 1px solid #a0a5ad;
		background: #fff;
		font-size: 10px;
	}
`;

const ListWrap = styled.div`
	position: relative;
	display: flex;
`;

const ListBox = styled.select`
	width: 74px;
	height: ${(p) => p.$h}px;
	padding: 1px;
	border: 1px solid #8d939c;
	border-radius: 0;
	background: #fff;
	overflow: hidden;
	outline: none;

	option {
		height: 12px;
		min-height: 12px;
		padding: 0 1px;
		color: #222;
		font-size: 9px;
		line-height: 12px;
	}
	option:checked {
		background: #0078d7 linear-gradient(#0078d7, #0078d7);
		color: #fff;
	}
`;

const ListScroll = styled.span`
	position: absolute;
	top: 1px;
	right: 1px;
	bottom: 1px;
	width: 14px;
	background: #f0f0f0;

	&::after {
		content: "";
		position: absolute;
		left: 6px;
		top: 14px;
		width: 2px;
		height: 14px;
		background: #888;
	}
`;

const DialogButtons = styled.div`
	display: flex;
	justify-content: flex-end;
	gap: 7px;
	padding: 16px 5px 0 0;
`;

const DialogButton = styled.button`
	width: 60px;
	height: 20px;
	border: 1px solid ${(p) => (p.$main ? "#0078d7" : "#d4d4d4")};
	border-radius: 3px;
	background: #fdfdfd;
	font-size: ${(p) => (p.$main ? 10 : 9)}px;
`;

const Pointer = styled.div`
	position: absolute;
	left: 474px;
	top: 391px;
	pointer-events: none;
`;

const Callout = styled.aside`
	position: absolute;
	left: 429px;
	top: 459px;
	width: 518px;
	height: 104px;
	display: flex;
	align-items: flex-start;
	gap: 10px;
	border: 3px solid red;
	background: rgba(255, 255, 255, 0.85);
	color: #000;

	p {
		margin: 0;
		font: 700 38px/46px "Noto Sans CJK JP", sans-serif;
		font-feature-settings: normal;
		white-space: nowrap;
	}
`;

const Step = styled.span`
	width: 67px;
	height: 64px;
	background: red;
	color: #fff;
	font: 700 48px/57px "Noto Sans CJK JP", sans-serif;
	text-align: center;
`;
